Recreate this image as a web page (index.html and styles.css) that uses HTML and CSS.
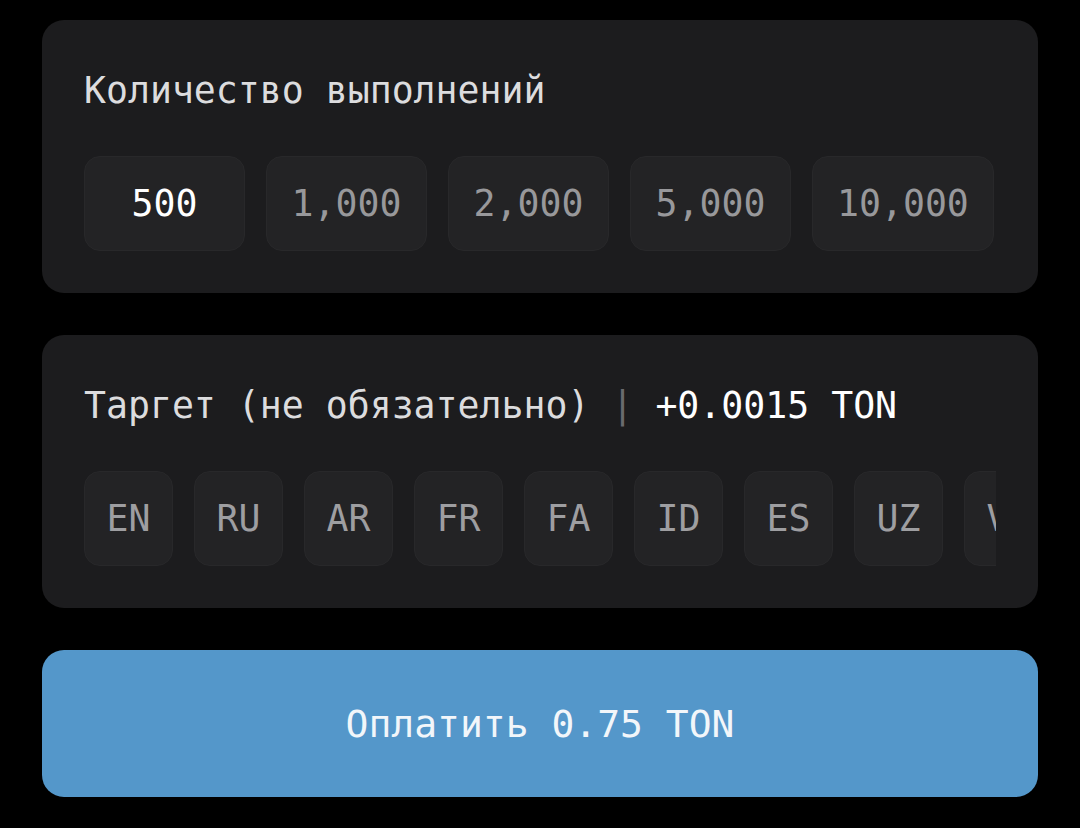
FILE: index.html
```html
<!DOCTYPE html>
<html lang="ru">
<head>
<meta charset="UTF-8" />
<meta name="viewport" content="width=device-width, initial-scale=1.0"/>
<title>Оплата</title>
<link rel="stylesheet" href="styles.css">
</head>
<body>

<div class="container">

    <!-- Количество -->
    <div class="card">
        <div class="card-title">Количество выполнений</div>
        <div class="chips">
            <div class="chip amount active">500</div>
            <div class="chip amount">1,000</div>
            <div class="chip amount">2,000</div>
            <div class="chip amount">5,000</div>
            <div class="chip amount">10,000</div>
        </div>
    </div>

    <!-- Таргет -->
    <div class="card">
        <div class="card-title">Таргет (не обязательно) <span class="sep">|</span> <span class="price">+0.0015 TON</span></div>
        <div class="chips scroll">
            <div class="chip lang">EN</div>
            <div class="chip lang">RU</div>
            <div class="chip lang">AR</div>
            <div class="chip lang">FR</div>
            <div class="chip lang">FA</div>
            <div class="chip lang">ID</div>
            <div class="chip lang">ES</div>
            <div class="chip lang">UZ</div>
            <div class="chip lang">VI</div>
        </div>
    </div>

    <button class="pay">Оплатить 0.75 TON</button>

</div>

</body>
</html>
```

FILE: styles.css
```css
*{
    margin:0;
    padding:0;
    box-sizing:border-box;
}

body{
    background:#000;
    font-family:"DejaVu Sans Mono","Liberation Mono",monospace;
    color:#e8e8ea;
    padding:20px 42px;
}

.container{
    display:flex;
    flex-direction:column;
    gap:42px;
}

.card{
    background:#1c1c1e;
    border-radius:22px;
    padding:43px 42px 42px;
}

.card-title{
    font-size:36.5px;
    line-height:55px;
    color:#dcdcde;
    white-space:nowrap;
}

.sep{
    color:#6a6a6e;
}

.price{
    color:#fff;
}

.chips{
    display:flex;
    gap:21px;
    margin-top:38px;
}

.chips.scroll{
    overflow:hidden;
}

.chip{
    flex-shrink:0;
    background:#232325;
    border:1px solid #28282a;
    border-radius:16px;
    height:95px;
    display:flex;
    align-items:center;
    justify-content:center;
    font-size:36.5px;
    color:#98989b;
}

.amount{
    min-width:161px;
    padding:0 24px;
}

.amount.active{
    color:#fff;
}

.lang{
    width:89px;
    color:#9e9ea1;
}

.pay{
    height:147px;
    border:none;
    border-radius:22px;
    background:#5497ca;
    color:#f2f6fa;
    font-family:inherit;
    font-size:38px;
    cursor:pointer;
}
```
